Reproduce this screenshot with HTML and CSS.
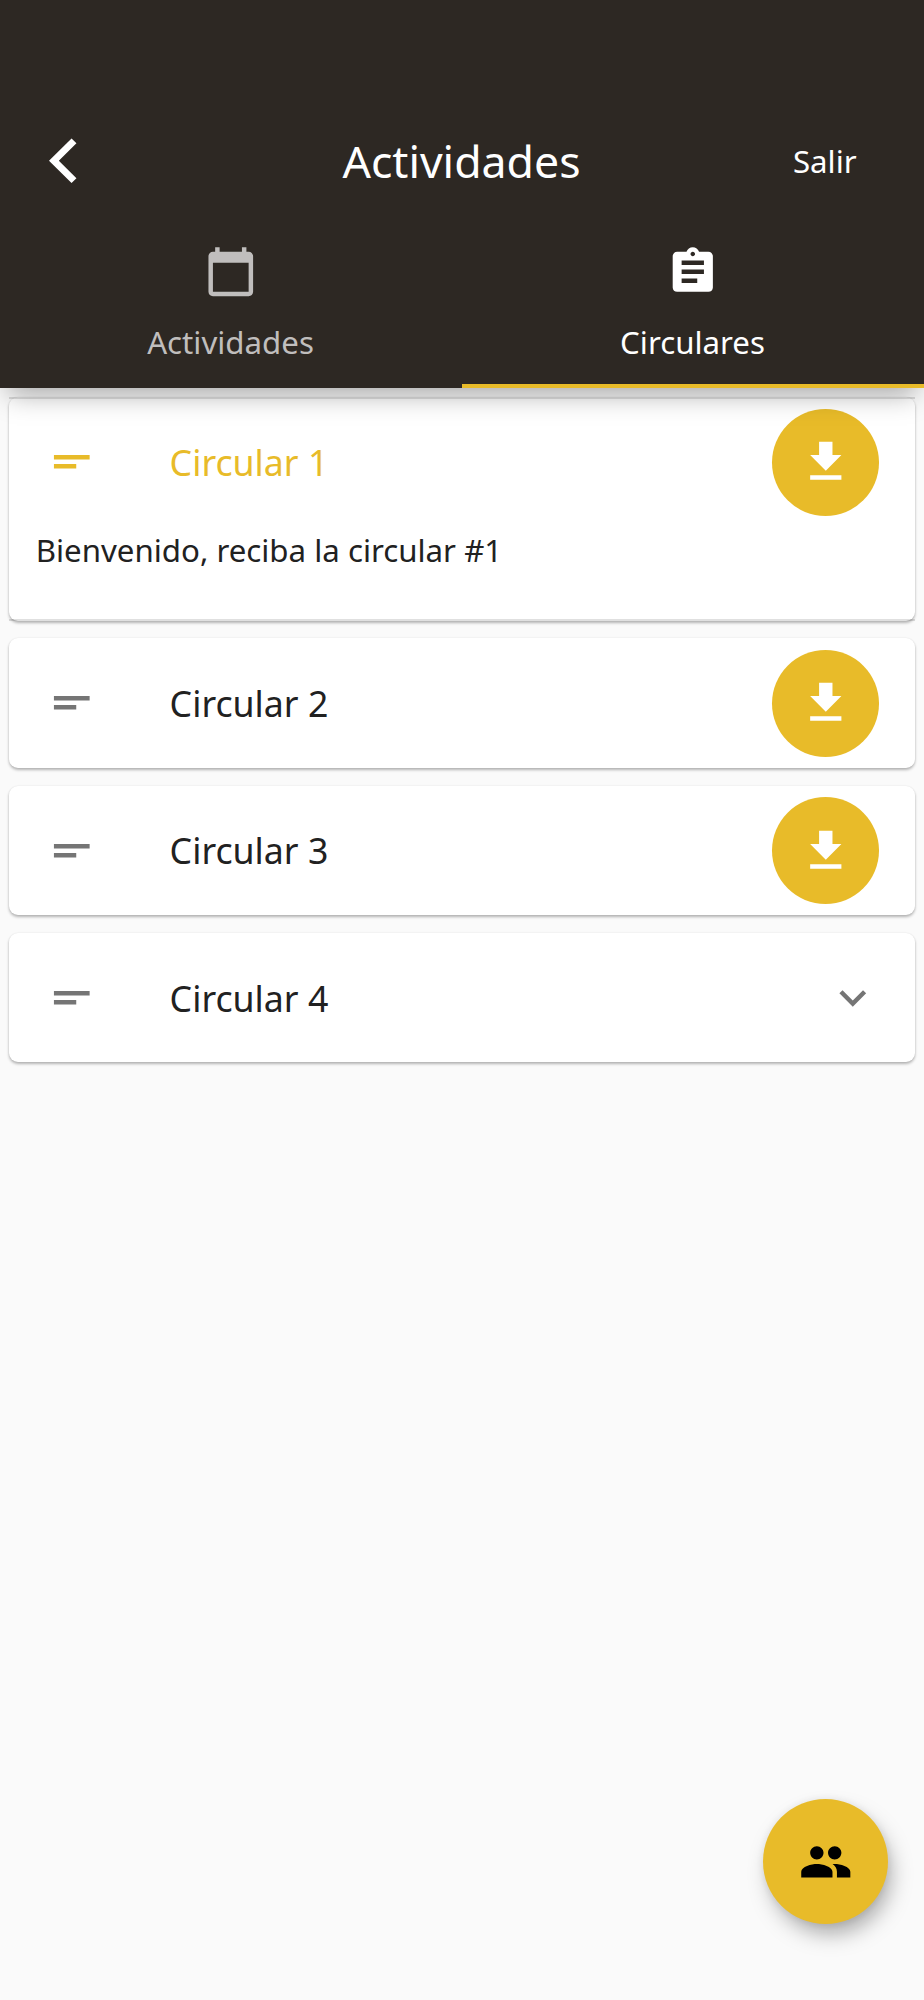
FILE: index.html
```html
<!DOCTYPE html>
<html lang="es">
<head>
<meta charset="utf-8">
<title>Actividades</title>
<link rel="stylesheet" href="styles.css">
</head>
<body>
<svg width="0" height="0" class="defs">
  <symbol id="short-text" viewBox="0 0 24 24"><path d="M4 9h16v2H4zM4 13h10v2H4z"/></symbol>
  <symbol id="download" viewBox="0 0 24 24"><path d="M19 9h-4V3H9v6H5l7 7 7-7zM5 18v2h14v-2H5z"/></symbol>
</svg>
<header class="header">
  <div class="appbar">
    <button class="back" aria-label="Atrás"><svg class="icon" viewBox="0 0 24 24"><path d="M12.3 4.2L10.1 2 0 12l10.1 10 2.2-2.2L4.4 12z"/></svg></button>
    <h1 class="title">Actividades</h1>
    <button class="exit">Salir</button>
  </div>
  <nav class="tabs">
    <a class="tab">
      <svg class="icon" viewBox="0 0 24 24"><path d="M20 3h-1V1h-2v2H7V1H5v2H4c-1.1 0-2 .9-2 2v16c0 1.1.9 2 2 2h16c1.1 0 2-.9 2-2V5c0-1.1-.9-2-2-2zm0 18H4V8h16v13z"/></svg>
      <span>Actividades</span>
    </a>
    <a class="tab active">
      <svg class="icon" viewBox="0 0 24 24"><path d="M19 3h-4.18C14.4 1.84 13.3 1 12 1c-1.3 0-2.4.84-2.82 2H5c-1.1 0-2 .9-2 2v14c0 1.1.9 2 2 2h14c1.1 0 2-.9 2-2V5c0-1.1-.9-2-2-2zm-7 0c.55 0 1 .45 1 1s-.45 1-1 1-1-.45-1-1 .45-1 1-1zm2 14H7v-2h7v2zm3-4H7v-2h10v2zm0-4H7V7h10v2z"/></svg>
      <span>Circulares</span>
    </a>
  </nav>
</header>
<main class="list">
  <section class="card open">
    <div class="row">
      <svg class="icon"><use href="#short-text"/></svg>
      <span class="name">Circular 1</span>
      <button class="round" aria-label="Descargar"><svg class="icon"><use href="#download"/></svg></button>
    </div>
    <p class="body">Bienvenido, reciba la circular #1</p>
  </section>
  <section class="card">
    <div class="row">
      <svg class="icon"><use href="#short-text"/></svg>
      <span class="name">Circular 2</span>
      <button class="round" aria-label="Descargar"><svg class="icon"><use href="#download"/></svg></button>
    </div>
  </section>
  <section class="card">
    <div class="row">
      <svg class="icon"><use href="#short-text"/></svg>
      <span class="name">Circular 3</span>
      <button class="round" aria-label="Descargar"><svg class="icon"><use href="#download"/></svg></button>
    </div>
  </section>
  <section class="card">
    <div class="row">
      <svg class="icon"><use href="#short-text"/></svg>
      <span class="name">Circular 4</span>
      <svg class="icon" viewBox="0 0 24 24"><path d="M16.59 8.59L12 13.17 7.41 8.59 6 10l6 6 6-6z"/></svg>
    </div>
  </section>
</main>
<button class="fab" aria-label="Personas"><svg class="icon" viewBox="0 0 24 24"><path d="M16 11c1.66 0 2.99-1.34 2.99-3S17.66 5 16 5c-1.66 0-3 1.34-3 3s1.34 3 3 3zm-8 0c1.66 0 2.99-1.34 2.99-3S9.66 5 8 5C6.34 5 5 6.34 5 8s1.34 3 3 3zm0 2c-2.33 0-7 1.17-7 3.5V19h14v-2.5c0-2.33-4.67-3.5-7-3.5zm8 0c-.29 0-.62.02-.97.05 1.16.84 1.97 1.97 1.97 3.45V19h6v-2.5c0-2.33-4.67-3.5-7-3.5z"/></svg></button>
</body>
</html>
```

FILE: styles.css
```css
/* 1rem is ten logical pixels of the 414-wide layout */
html {
  font-size: 22.32px;
}

* {
  box-sizing: border-box;
}

body {
  margin: 0;
  min-height: 2000px;
  background: #fafafa;
  color: #212121;
  font-family: "Noto Sans", sans-serif;
  font-size: 1.4rem;
  overflow: hidden;
}

button {
  border: 0;
  padding: 0;
  background: none;
  color: inherit;
  font: inherit;
}

.defs {
  display: block;
}

.icon {
  display: block;
  flex: none;
  width: 2.4rem;
  height: 2.4rem;
  fill: currentColor;
}

.header {
  position: relative;
  z-index: 1;
  height: 388px;
  padding-top: 4.4rem;
  background: #2d2823;
  color: #fff;
  box-shadow: 0 14px 26px -8px rgba(0, 0, 0, 0.34);
}

.appbar {
  display: grid;
  grid-template-columns: 8.8rem 1fr 8.8rem;
  align-items: center;
  height: 5.6rem;
}

.back {
  justify-self: start;
  margin-left: 2.2rem;
}

.title {
  margin: 0;
  padding-right: 1px;
  text-align: center;
  font-size: 2rem;
  font-weight: 400;
}

.exit {
  padding-right: 2px;
}

.tabs {
  display: grid;
  grid-template-columns: 1fr 1fr;
  height: 7.4rem;
}

.tab {
  display: flex;
  flex-direction: column;
  align-items: center;
  gap: 1.03rem;
  padding-top: 0.97rem;
  padding-right: 1px;
  border-bottom: 4px solid transparent;
  color: #c0bebd;
}

.tab.active {
  border-color: #e8bb29;
  color: #fff;
}

.list {
  display: flex;
  flex-direction: column;
  gap: 0.8rem;
  padding: 0.4rem;
  padding-top: 0.42rem;
}

.card {
  position: relative;
  border-radius: 9px;
  background: #fff;
  box-shadow: 0 2px 3px rgba(0, 0, 0, 0.28), 0 0 2px rgba(0, 0, 0, 0.08);
}

.open {
  height: 10rem;
}

/* Square-ended divider lines of the expanded card */
.open::before {
  content: "";
  position: absolute;
  inset: 0;
  border-top: 2px solid rgba(0, 0, 0, 0.12);
  border-bottom: 2px solid rgba(0, 0, 0, 0.12);
}

.row {
  display: flex;
  align-items: center;
  height: 5.8rem;
  padding: 0 1.6rem;
  color: #757575;
}

.name {
  flex: 1;
  margin-left: 3.2rem;
  font-size: 1.6rem;
  color: #212121;
}

.open .row,
.open .name {
  color: #e8bb29;
}

.round {
  display: flex;
  align-items: center;
  justify-content: center;
  width: 4.8rem;
  height: 4.8rem;
  border-radius: 50%;
  background: #e8bb29;
  color: #fff;
}

.body {
  margin: 0;
  padding: 0.1rem 1.2rem;
}

.fab {
  position: fixed;
  right: 1.6rem;
  bottom: 3.4rem;
  display: flex;
  align-items: center;
  justify-content: center;
  width: 5.6rem;
  height: 5.6rem;
  border-radius: 50%;
  background: #e8bb29;
  color: #000;
  box-shadow: 5px 12px 22px -3px rgba(0, 0, 0, 0.34), 0 0 10px rgba(0, 0, 0, 0.08);
}
```
